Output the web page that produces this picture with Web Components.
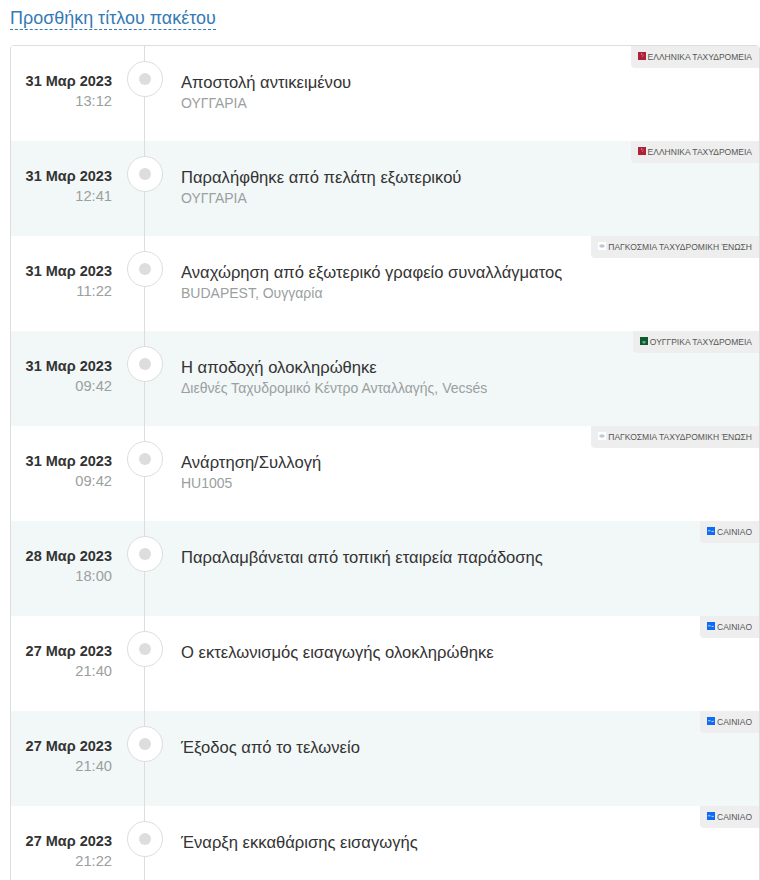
<!DOCTYPE html>
<html lang="el">
<head>
<meta charset="utf-8">
<title>Tracking</title>
<style>
  html, body { margin: 0; height: 880px; overflow: hidden; background: #fff; }
  body { font-family: "Liberation Sans", Arial, sans-serif; }
</style>
</head>
<body>
<track-page>
  <track-title>Προσθήκη τίτλου πακέτου</track-title>
  <track-list>
    <track-row day="31 Μαρ 2023" time="13:12" title="Αποστολή αντικειμένου" place="ΟΥΓΓΑΡΙΑ" carrier="ΕΛΛΗΝΙΚΑ ΤΑΧΥΔΡΟΜΕΙΑ" logo="elta"></track-row>
    <track-row alt day="31 Μαρ 2023" time="12:41" title="Παραλήφθηκε από πελάτη εξωτερικού" place="ΟΥΓΓΑΡΙΑ" carrier="ΕΛΛΗΝΙΚΑ ΤΑΧΥΔΡΟΜΕΙΑ" logo="elta"></track-row>
    <track-row day="31 Μαρ 2023" time="11:22" title="Αναχώρηση από εξωτερικό γραφείο συναλλάγματος" place="BUDAPEST, Ουγγαρία" carrier="ΠΑΓΚΟΣΜΙΑ ΤΑΧΥΔΡΟΜΙΚΗ ΈΝΩΣΗ" logo="upu"></track-row>
    <track-row alt day="31 Μαρ 2023" time="09:42" title="Η αποδοχή ολοκληρώθηκε" place="Διεθνές Ταχυδρομικό Κέντρο Ανταλλαγής, Vecsés" carrier="ΟΥΓΓΡΙΚΑ ΤΑΧΥΔΡΟΜΕΙΑ" logo="magyar"></track-row>
    <track-row day="31 Μαρ 2023" time="09:42" title="Ανάρτηση/Συλλογή" place="HU1005" carrier="ΠΑΓΚΟΣΜΙΑ ΤΑΧΥΔΡΟΜΙΚΗ ΈΝΩΣΗ" logo="upu"></track-row>
    <track-row alt day="28 Μαρ 2023" time="18:00" title="Παραλαμβάνεται από τοπική εταιρεία παράδοσης" carrier="CAINIAO" logo="cainiao"></track-row>
    <track-row day="27 Μαρ 2023" time="21:40" title="Ο εκτελωνισμός εισαγωγής ολοκληρώθηκε" carrier="CAINIAO" logo="cainiao"></track-row>
    <track-row alt day="27 Μαρ 2023" time="21:40" title="Έξοδος από το τελωνείο" carrier="CAINIAO" logo="cainiao"></track-row>
    <track-row day="27 Μαρ 2023" time="21:22" title="Έναρξη εκκαθάρισης εισαγωγής" carrier="CAINIAO" logo="cainiao"></track-row>
  </track-list>
</track-page>

<script>
class TrackPage extends HTMLElement {
    constructor() {
        super();
        this.attachShadow({ mode: 'open' });
        this.shadowRoot.innerHTML = `
            <style>
                :host {
                    display: flex;
                    flex-direction: column;
                    gap: 15px;
                    padding: 7px 0 0 10px;
                }
            </style>
            <slot></slot>
        `;
    }
}

class TrackTitle extends HTMLElement {
    constructor() {
        super();
        this.attachShadow({ mode: 'open' });
        this.shadowRoot.innerHTML = `
            <style>
                :host {
                    display: block;
                    align-self: flex-start;
                    color: #337ab7;
                    font-size: 17.95px;
                    line-height: 22px;
                    border-bottom: 1px dashed #337ab7;
                }
            </style>
            <slot></slot>
        `;
    }
}

class TrackList extends HTMLElement {
    constructor() {
        super();
        this.attachShadow({ mode: 'open' });
        this.shadowRoot.innerHTML = `
            <style>
                :host {
                    display: block;
                    width: 748px;
                    border: 1px solid #ddd;
                    border-radius: 4px 4px 0 0;
                    overflow: hidden;
                }
            </style>
            <slot></slot>
        `;
    }
}

const LOGOS = {
    elta: `<svg viewBox="0 0 8 8"><rect width="8" height="8" fill="#ad2238"/><rect x="3" y="1.500" width="1" height="1" fill="#eec4cb"/><rect x="4.500" y="2.500" width="1" height="1" fill="#dc9aa6"/><rect x="4" y="4" width="1" height="1" fill="#c9616f"/></svg>`,
    upu: `<svg viewBox="0 0 8 8"><rect width="8" height="8" fill="#fff"/><ellipse cx="4" cy="4" rx="2.800" ry="1.800" fill="#bccadb"/></svg>`,
    magyar: `<svg viewBox="0 0 8 8"><rect width="8" height="8" fill="#0c5a30"/><path d="M2.500 4h3v2l-1.500.8-1.500-.8z" fill="#6fa586"/></svg>`,
    cainiao: `<svg viewBox="0 0 8 8"><rect width="8" height="8" fill="#0f6cf2"/><path d="M1 3.800h2.500M4.500 4.400h2.200" stroke="#d5e4fc" stroke-width=".9"/></svg>`
};

class TrackRow extends HTMLElement {
    constructor() {
        super();
        this.attachShadow({ mode: 'open' });
        this.shadowRoot.innerHTML = `
            <style>
                :host {
                    display: flex;
                    position: relative;
                    height: 95px;
                    background: #fff;
                }
                :host([alt]) { background: #f2f7f7; }
                .when {
                    width: 101px;
                    padding-top: 25px;
                    text-align: right;
                    flex-shrink: 0;
                }
                .day {
                    font-size: 14.5px;
                    font-weight: 700;
                    line-height: 20px;
                    color: #333;
                    white-space: nowrap;
                }
                .time {
                    font-size: 14.7px;
                    line-height: 20px;
                    color: #9aa0a0;
                }
                .rail {
                    position: relative;
                    width: 69px;
                    flex-shrink: 0;
                }
                .rail::before {
                    content: "";
                    position: absolute;
                    left: 32px;
                    top: 0;
                    bottom: 0;
                    width: 1px;
                    background: #ddd;
                }
                .dot {
                    position: absolute;
                    left: 15px;
                    top: 15px;
                    width: 34px;
                    height: 34px;
                    border: 1px solid #ddd;
                    border-radius: 50%;
                    background: #fff;
                }
                .dot::after {
                    content: "";
                    position: absolute;
                    left: 11px;
                    top: 11px;
                    width: 12px;
                    height: 12px;
                    border-radius: 50%;
                    background: #ddd;
                }
                .what { padding-top: 26px; min-width: 0; }
                .title {
                    font-size: 16.6px;
                    line-height: 21px;
                    color: #333;
                    white-space: nowrap;
                }
                .place {
                    font-size: 14px;
                    line-height: 20px;
                    color: #9aa0a0;
                    white-space: nowrap;
                }
                .carrier {
                    position: absolute;
                    top: 0;
                    right: 0;
                    display: flex;
                    align-items: center;
                    gap: 2px;
                    height: 22px;
                    padding: 0 7px;
                    background: #eee;
                    border-radius: 0 0 0 4px;
                    font-size: 8.5px;
                    color: #555;
                    white-space: nowrap;
                }
                .carrier svg { width: 8px; height: 8px; margin-top: -3px; }
            </style>
            <div class="when">
                <div class="day"></div>
                <div class="time"></div>
            </div>
            <div class="rail"><div class="dot"></div></div>
            <div class="what">
                <div class="title"></div>
                <div class="place"></div>
            </div>
            <div class="carrier"><span class="logo"></span><span class="name"></span></div>
        `;
    }

    connectedCallback() {
        const root = this.shadowRoot;
        root.querySelector('.day').textContent = this.getAttribute('day') || '';
        root.querySelector('.time').textContent = this.getAttribute('time') || '';
        root.querySelector('.title').textContent = this.getAttribute('title') || '';
        root.querySelector('.place').textContent = this.getAttribute('place') || '';
        root.querySelector('.name').textContent = this.getAttribute('carrier') || '';
        root.querySelector('.logo').outerHTML = LOGOS[this.getAttribute('logo')] || '';
    }
}

customElements.define('track-page', TrackPage);
customElements.define('track-title', TrackTitle);
customElements.define('track-list', TrackList);
customElements.define('track-row', TrackRow);
</script>
</body>
</html>
